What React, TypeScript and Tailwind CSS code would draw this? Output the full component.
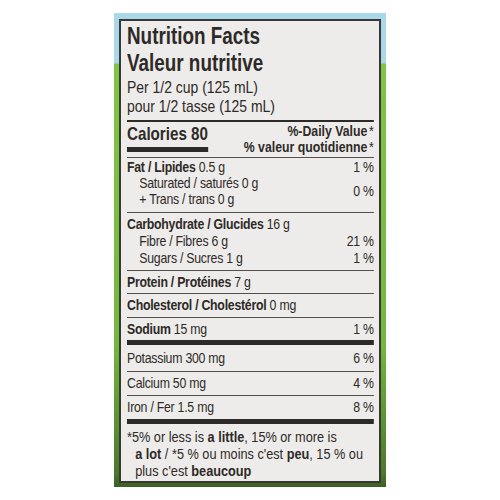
// label type is a condensed grotesque; Liberation Sans squeezed to 82% reads like Arial Narrow
const font = "font-['Liberation_Sans',Arial,sans-serif]";

const Thin = () => <div className="h-px w-full bg-[#55504c]" />;
const Thick = () => <div className="h-[5px] w-full bg-[#2d2a27]" />;

const App = () => {
  return (
    <div className={`w-[500px] h-[500px] bg-white flex justify-center pt-[13px] ${font}`}>
      {/* coloured package panel */}
      <div className="w-[272px] h-[474px] pl-[5px] pr-[5px] pt-[6px] pb-[4px] bg-[linear-gradient(180deg,#a9d8eb_0px,#a9d8eb_50px,#80c545_51px,#72b83e_70%,#4a7a2b_97%,#3c5f24_100%)]">
        {/* label */}
        <div className="h-full border-2 border-[#3a3835] bg-[#edecea] pl-[6px] pr-[5px] pt-[2px] text-[#2e2a27]">
          <div className="w-[301px] origin-left scale-x-[0.82] flex flex-col">
            {/* heading */}
            <div className="text-[23px] leading-[27px] font-bold">
              <div>Nutrition Facts</div>
              <div>Valeur nutritive</div>
            </div>
            <div className="mt-[1px] text-[17px] leading-[19px]">
              <div>Per 1/2 cup (125 mL)</div>
              <div>pour 1/2 tasse (125 mL)</div>
            </div>
            <div className="mt-[4px] h-[2px] w-full bg-[#2d2a27]" />

            {/* calories */}
            <div className="h-[35px] flex justify-between items-start">
              <div className="pt-[2px] w-[99px]">
                <div className="text-[18.5px] leading-[20px] font-bold whitespace-nowrap">Calories 80</div>
                <div className="mt-[3px] h-[5px] w-full bg-[#2d2a27]" />
              </div>
              <div className="pt-[0.5px] text-[15px] leading-[16px] font-bold text-right">
                <div>
                  %-Daily Value<span className="font-normal ml-[2px]">*</span>
                </div>
                <div>
                  % valeur quotidienne<span className="font-normal ml-[2px]">*</span>
                </div>
              </div>
            </div>
            <Thin />

            <div className="text-[15px] tracking-[-0.3px]">
              {/* fat */}
              <div className="pt-[1px] pb-[5px]">
                <div className="h-[16px] flex items-center justify-between">
                  <span>
                    <b>Fat / Lipides</b> 0.5 g
                  </span>
                  <span>1 %</span>
                </div>
                <div className="flex items-center justify-between">
                  <div className="pl-[15px]">
                    <div className="h-[16px] flex items-center">Saturated / saturés 0 g</div>
                    <div className="h-[16px] flex items-center">+ Trans / trans 0 g</div>
                  </div>
                  <span>0 %</span>
                </div>
              </div>
              <Thin />

              {/* carbohydrate */}
              <div className="pt-[3px] pb-[3px]">
                <div className="h-[17px] flex items-center">
                  <b>Carbohydrate / Glucides</b>&nbsp;16 g
                </div>
                <div className="h-[17px] flex items-center justify-between pl-[15px]">
                  <span>Fibre / Fibres 6 g</span>
                  <span>21 %</span>
                </div>
                <div className="h-[17px] flex items-center justify-between pl-[15px]">
                  <span>Sugars / Sucres 1 g</span>
                  <span>1 %</span>
                </div>
              </div>
              <Thin />

              <div className="h-[22px] flex items-center">
                <b>Protein / Protéines</b>&nbsp;7 g
              </div>
              <Thin />
              <div className="h-[23px] flex items-center">
                <b>Cholesterol / Cholestérol</b>&nbsp;0 mg
              </div>
              <Thin />
              <div className="h-[22px] flex items-center justify-between">
                <span>
                  <b>Sodium</b> 15 mg
                </span>
                <span>1 %</span>
              </div>
              <Thick />

              <div className="h-[26px] flex items-center justify-between">
                <span>Potassium 300 mg</span>
                <span>6 %</span>
              </div>
              <Thin />
              <div className="h-[23px] flex items-center justify-between">
                <span>Calcium 50 mg</span>
                <span>4 %</span>
              </div>
              <Thin />
              <div className="h-[23px] flex items-center justify-between">
                <span>Iron / Fer 1.5 mg</span>
                <span>8 %</span>
              </div>
              <Thick />
            </div>

            {/* footnote */}
            <div className="pt-[3.5px] text-[15.5px] leading-[17px] whitespace-nowrap">
              <div>
                *5% or less is <b>a little</b>, 15% or more is
              </div>
              <div className="pl-[10px]">
                <b>a lot</b> / *5 % ou moins c'est <b>peu</b>, 15 % ou
              </div>
              <div className="pl-[10px]">
                plus c'est <b>beaucoup</b>
              </div>
            </div>
          </div>
        </div>
      </div>
    </div>
  );
};

export default App;
